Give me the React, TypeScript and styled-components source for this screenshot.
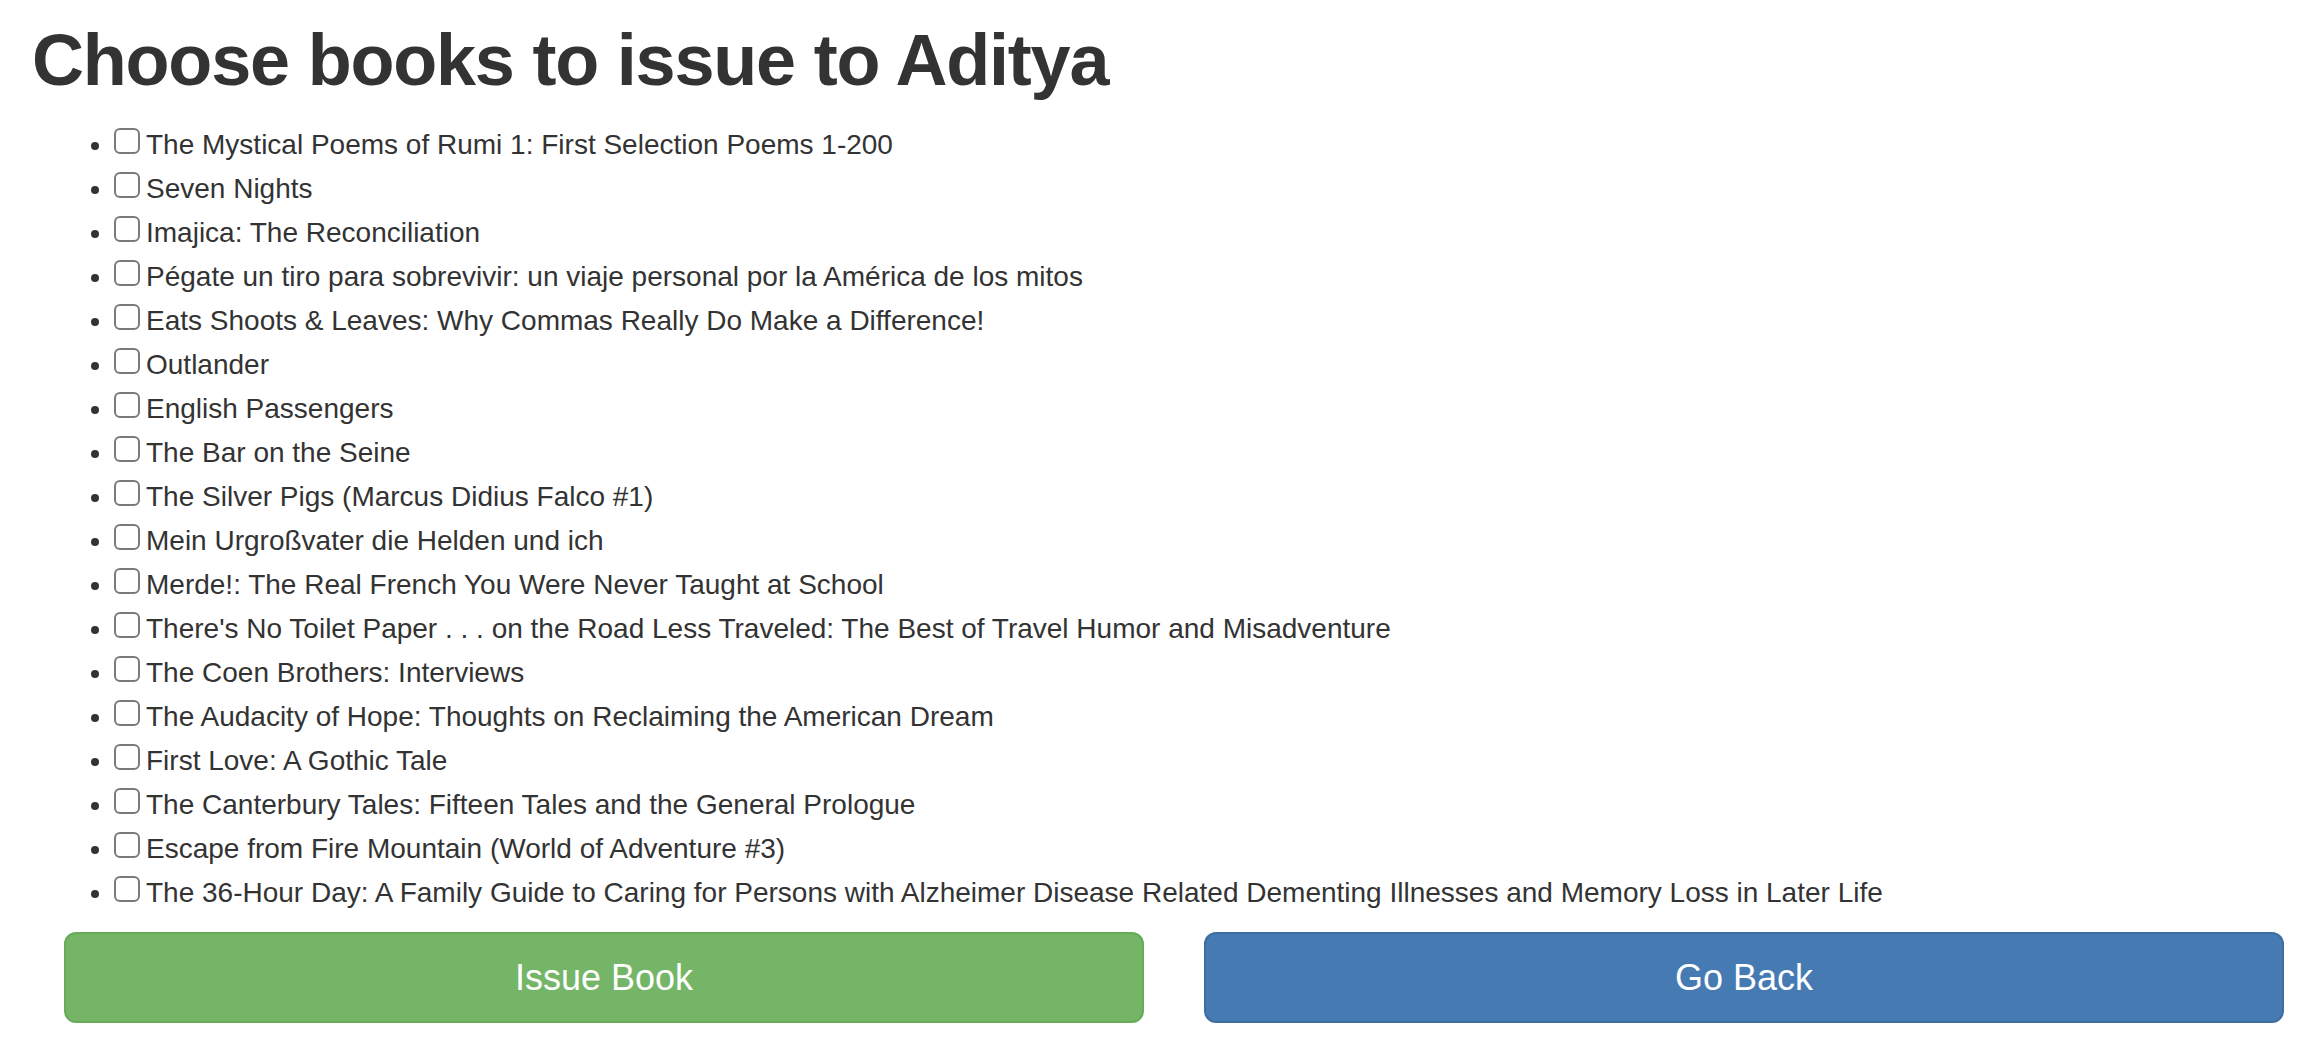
import React from "react";
import styled, { createGlobalStyle } from "styled-components";

const GlobalStyle = createGlobalStyle`
  html, body {
    margin: 0;
    padding: 0;
    background: #ffffff;
  }
  body {
    font-family: "Liberation Sans", Arial, Helvetica, sans-serif;
    font-size: 28px;
    line-height: 40px;
    color: #333333;
  }
`;

const Page = styled.div`
  padding: 0 32px;
`;

const Title = styled.h1`
  margin: 21px 0 23px;
  font-size: 72px;
  line-height: 79px;
  font-weight: 700;
  letter-spacing: -1.2px;
  color: #333333;
`;

const BookList = styled.ul`
  margin: 0 0 17px;
  padding-left: 82px;
  list-style: disc;
`;

const BookItem = styled.li`
  line-height: 44px;
  font-size: 28px;
`;

const Check = styled.input`
  appearance: none;
  -webkit-appearance: none;
  width: 26px;
  height: 26px;
  margin: 0 6px 0 0;
  vertical-align: baseline;
  border: 2px solid #7a7a7a;
  border-radius: 6px;
  background: #ffffff;
  box-sizing: border-box;
  cursor: pointer;
  &:checked {
    background: #1a73e8;
    border-color: #1a73e8;
  }
`;

const ButtonRow = styled.div`
  display: grid;
  grid-template-columns: 1fr 1fr;
  column-gap: 60px;
  padding-left: 32px;
`;

const ActionButton = styled.button<{ $variant: "success" | "primary" }>`
  display: block;
  width: 100%;
  height: 91px;
  padding: 0 32px;
  font-family: "Liberation Sans", Arial, Helvetica, sans-serif;
  font-size: 36px;
  line-height: 47px;
  color: #ffffff;
  border-radius: 12px;
  border: 2px solid ${(p) => (p.$variant === "success" ? "#67ab59" : "#3d6da1")};
  background: ${(p) => (p.$variant === "success" ? "#74b567" : "#467ab2")};
  cursor: pointer;
`;

const books = [
  "The Mystical Poems of Rumi 1: First Selection Poems 1-200",
  "Seven Nights",
  "Imajica: The Reconciliation",
  "Pégate un tiro para sobrevivir: un viaje personal por la América de los mitos",
  "Eats Shoots & Leaves: Why Commas Really Do Make a Difference!",
  "Outlander",
  "English Passengers",
  "The Bar on the Seine",
  "The Silver Pigs (Marcus Didius Falco #1)",
  "Mein Urgroßvater die Helden und ich",
  "Merde!: The Real French You Were Never Taught at School",
  "There's No Toilet Paper . . . on the Road Less Traveled: The Best of Travel Humor and Misadventure",
  "The Coen Brothers: Interviews",
  "The Audacity of Hope: Thoughts on Reclaiming the American Dream",
  "First Love: A Gothic Tale",
  "The Canterbury Tales: Fifteen Tales and the General Prologue",
  "Escape from Fire Mountain (World of Adventure #3)",
  "The 36-Hour Day: A Family Guide to Caring for Persons with Alzheimer Disease Related Dementing Illnesses and Memory Loss in Later Life",
];

export default function App() {
  return (
    <>
      <GlobalStyle />
      <Page>
        <Title>Choose books to issue to Aditya</Title>
        <BookList>
          {books.map((b) => (
            <BookItem key={b}>
              <Check type="checkbox" />
              {b}
            </BookItem>
          ))}
        </BookList>
        <ButtonRow>
          <ActionButton $variant="success">Issue Book</ActionButton>
          <ActionButton $variant="primary">Go Back</ActionButton>
        </ButtonRow>
      </Page>
    </>
  );
}
